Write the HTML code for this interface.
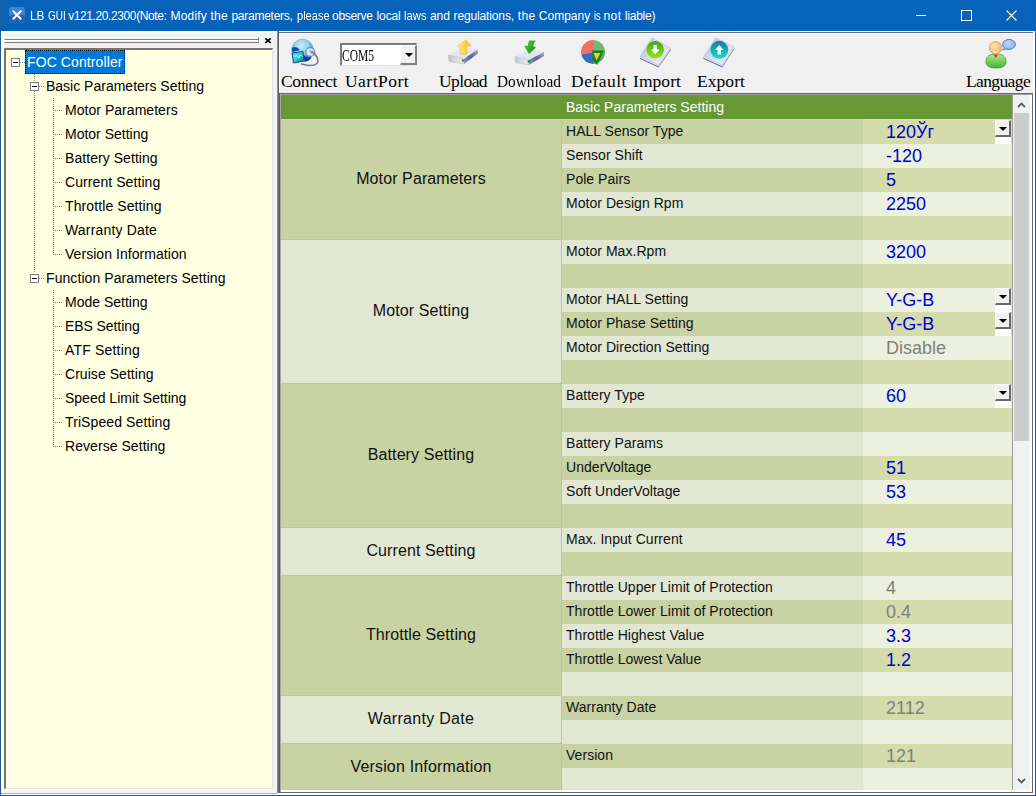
<!DOCTYPE html>
<html><head><meta charset="utf-8"><title>LB GUI</title>
<style>
*{box-sizing:border-box;margin:0;padding:0}
html,body{width:1036px;height:796px;overflow:hidden;background:#f0f0f0;font-family:"Liberation Sans",sans-serif}
body{position:relative}
div,i,span{position:absolute;display:block}
/* window frame */
#frame{left:0;top:0;width:1036px;height:796px;border:1px solid #1c5c9c;border-top:none;pointer-events:none;z-index:50}
#title{left:0;top:0;width:1036px;height:31px;background:#0763ba}
#ttext{left:30px;top:1px;height:31px;line-height:31px;color:#fff;font-size:12px;white-space:nowrap}
#ttext span{top:0;height:31px;line-height:31px;white-space:nowrap}
/* left dock pane */
#lp{left:1px;top:31px;width:276px;height:764px;background:#f2f2f2;border-left:3px solid #fff;border-top:2px solid #fff;border-bottom:1px solid #fff}
.grip{left:4px;width:255px;height:3px;border-top:1px solid #fff;border-left:1px solid #fff;border-bottom:1px solid #808080;border-right:1px solid #808080;background:#f0f0f0}
#tree{left:4px;top:48px;width:269px;height:741px;background:#ffffe1;border-top:2px solid #747474;border-left:2px solid #747474;border-right:1px solid #e4e4e4;border-bottom:1px solid #e4e4e4}
.ti,.tsel{height:24px;line-height:25px;font-size:14px;color:#000;white-space:nowrap}
.tsel{background:#0078d7;color:#fff;padding:0 2px;width:100px;letter-spacing:.1px;outline:1px dotted #000;outline-offset:-1px}
.tbox{width:9px;height:9px;border:1px solid #808080;background:#fff}
.tbox i{left:1px;top:3px;width:5px;height:1px;background:#000}
.hdot{height:1px;background:repeating-linear-gradient(90deg,#808080 0 1px,transparent 1px 2px)}
.vdot{width:1px;background:repeating-linear-gradient(180deg,#808080 0 1px,transparent 1px 2px)}
/* right panel */
#rp{left:277px;top:31px;width:758px;height:764px;background:#fff}
#tb{left:279px;top:33px;width:754px;height:60px;background:#f0f0f0;border-top:1px solid #fafafa;border-left:1px solid #fafafa}
.tl{height:18px;line-height:18px;font-family:"Liberation Serif",serif;font-size:17.5px;color:#000;white-space:nowrap}
.ico{width:32px;height:32px;top:36px}
/* grid */
#grid{left:281px;top:95px;width:731px;height:695px;background:#fff;overflow:hidden}
#ghead{left:281px;top:95px;width:731px;height:24px;background:#669933;color:#fff;font-size:14px;line-height:24px}
#ghead span{left:285px;top:0;white-space:nowrap}
.grp{left:281px;width:281px;text-align:center;font-size:16px;color:#111;border-right:1px solid #bcc4a2;border-bottom:1px solid #bcc4a2;white-space:nowrap;letter-spacing:.1px}
.gd{background:#c8d2a2}
.gl{background:#e2e7d3}
.pc{left:562px;width:301px;height:24px;line-height:23px;font-size:14px;color:#111;padding-left:4px;white-space:nowrap;letter-spacing:.04px}
.vc{left:863px;width:149px;height:24px;line-height:25px;font-size:18px;padding-left:23px;white-space:nowrap}
.pc.rd{background:#c8d2a2}
.pc.rl{background:#e2e7d3}
.vc.rd{background:#d3dcaa}
.vc.rl{background:#ecf0de}
.vb{color:#0000d0}
.vg{color:#808080}
.cb{left:995px;width:16px;height:24px;background:#fff}
.cbb{left:0;top:0;width:16px;height:17px;background:#f0f0f0;border-top:1px solid #fff;border-left:1px solid #fff;border-right:2px solid #696969;border-bottom:2px solid #696969}
.cbb i{left:3px;top:6px;width:0;height:0;border-left:4px solid transparent;border-right:4px solid transparent;border-top:4px solid #000}
/* scrollbar */
#sb{left:1013px;top:95px;width:17px;height:695px;background:#f1f1f2}
#thumb{left:1014px;top:113px;width:14.5px;height:328.4px;background:#cdcdcd}
</style></head><body>
<div id="title"></div>
<div id="ttext"><span style="left:0.1px;transform:scaleX(0.988);transform-origin:0 50%">LB</span><span style="left:17.5px;transform:scaleX(0.835);transform-origin:0 50%">GUI</span><span style="left:38.2px;letter-spacing:-0.399px">v121.20.2300(Note:</span><span style="left:140.5px;letter-spacing:0.191px">Modify</span><span style="left:180.5px;letter-spacing:0.264px">the</span><span style="left:201.4px;letter-spacing:-0.252px">parameters,</span><span style="left:266.6px;transform:scaleX(0.922);transform-origin:0 50%">please</span><span style="left:302.1px;letter-spacing:-0.315px">observe</span><span style="left:346.6px;letter-spacing:-0.147px">local</span><span style="left:374.4px;transform:scaleX(0.941);transform-origin:0 50%">laws</span><span style="left:399.9px;letter-spacing:-0.008px">and</span><span style="left:423.6px;letter-spacing:-0.139px">regulations,</span><span style="left:487.8px;letter-spacing:0.314px">the</span><span style="left:508.8px;letter-spacing:0.007px">Company</span><span style="left:563.9px;transform:scaleX(0.773);transform-origin:0 50%">is</span><span style="left:573.5px;letter-spacing:0.414px">not</span><span style="left:594.7px;letter-spacing:-0.189px">liable)</span></div>
<svg style="position:absolute;left:0;top:0" width="1036" height="31" viewBox="0 0 1036 31">
 <rect x="9" y="7" width="16" height="16" rx="3" fill="#3f82cf"/>
 <rect x="9" y="15" width="16" height="8" rx="3" fill="#2463b0"/>
 <path d="M13.3 11.3 L20.7 18.7 M20.7 11.3 L13.3 18.7" stroke="#fff" stroke-width="2" stroke-linecap="round"/>
 <path d="M916 15.5 H926" stroke="#fff" stroke-width="1"/>
 <rect x="961.5" y="10.5" width="10" height="10" fill="none" stroke="#fff" stroke-width="1"/>
 <path d="M1006.5 10.5 L1016.5 20.5 M1016.5 10.5 L1006.5 20.5" stroke="#fff" stroke-width="1.1"/>
</svg>

<div id="lp"></div>
<div class="grip" style="top:37px"></div>
<div class="grip" style="top:40px"></div>
<svg style="position:absolute;left:264px;top:37px" width="8" height="7" viewBox="0 0 8 7"><path d="M1.3 1.3 L6.7 5.9 M6.7 1.3 L1.3 5.9" stroke="#000" stroke-width="1.7"/></svg>
<div id="tree"></div>
<div style="left:4px;top:789px;width:273px;height:4px;background:#f7f5f4"></div><div style="left:1px;top:793px;width:276px;height:1px;background:#a4b0bc"></div>
<div class="tsel" style="left:25px;top:50px">FOC Controller</div>
<div class="tbox" style="left:11px;top:58px"><i></i></div>
<div class="hdot" style="left:20px;top:62px;width:5px"></div>
<div class="ti" style="left:46px;top:74px">Basic Parameters Setting</div>
<div class="tbox" style="left:30px;top:82px"><i></i></div>
<div class="hdot" style="left:39px;top:86px;width:5px"></div>
<div class="ti" style="left:65px;top:98px;letter-spacing:0.040px">Motor Parameters</div>
<div class="hdot" style="left:53px;top:110px;width:9px"></div>
<div class="ti" style="left:65px;top:122px">Motor Setting</div>
<div class="hdot" style="left:53px;top:134px;width:9px"></div>
<div class="ti" style="left:65px;top:146px;letter-spacing:0.057px">Battery Setting</div>
<div class="hdot" style="left:53px;top:158px;width:9px"></div>
<div class="ti" style="left:65px;top:170px;letter-spacing:0.079px">Current Setting</div>
<div class="hdot" style="left:53px;top:182px;width:9px"></div>
<div class="ti" style="left:65px;top:194px;letter-spacing:0.100px">Throttle Setting</div>
<div class="hdot" style="left:53px;top:206px;width:9px"></div>
<div class="ti" style="left:65px;top:218px;letter-spacing:0.167px">Warranty Date</div>
<div class="hdot" style="left:53px;top:230px;width:9px"></div>
<div class="ti" style="left:65px;top:242px;letter-spacing:0.050px">Version Information</div>
<div class="hdot" style="left:53px;top:254px;width:9px"></div>
<div class="ti" style="left:46px;top:266px;letter-spacing:0.081px">Function Parameters Setting</div>
<div class="tbox" style="left:30px;top:274px"><i></i></div>
<div class="hdot" style="left:39px;top:278px;width:5px"></div>
<div class="ti" style="left:65px;top:290px">Mode Setting</div>
<div class="hdot" style="left:53px;top:302px;width:9px"></div>
<div class="ti" style="left:65px;top:314px;letter-spacing:-0.080px">EBS Setting</div>
<div class="hdot" style="left:53px;top:326px;width:9px"></div>
<div class="ti" style="left:65px;top:338px;letter-spacing:0.180px">ATF Setting</div>
<div class="hdot" style="left:53px;top:350px;width:9px"></div>
<div class="ti" style="left:65px;top:362px;letter-spacing:0.046px">Cruise Setting</div>
<div class="hdot" style="left:53px;top:374px;width:9px"></div>
<div class="ti" style="left:65px;top:386px">Speed Limit Setting</div>
<div class="hdot" style="left:53px;top:398px;width:9px"></div>
<div class="ti" style="left:65px;top:410px;letter-spacing:0.100px">TriSpeed Setting</div>
<div class="hdot" style="left:53px;top:422px;width:9px"></div>
<div class="ti" style="left:65px;top:434px;letter-spacing:0.057px">Reverse Setting</div>
<div class="hdot" style="left:53px;top:446px;width:9px"></div>
<div class="vdot" style="left:34px;top:74px;height:7px"></div>
<div class="vdot" style="left:34px;top:91px;height:182px"></div>
<div class="vdot" style="left:53px;top:98px;height:157px"></div>
<div class="vdot" style="left:53px;top:290px;height:157px"></div>

<div id="rp"></div>
<div style="left:277px;top:31px;width:1px;height:762px;background:#909094"></div>
<div style="left:278px;top:31px;width:1px;height:762px;background:#5e5e66"></div>
<div style="left:278px;top:32px;width:757px;height:761px;border-top:1px solid #696969;border-left:1px solid #5e5e66;border-bottom:1px solid #696969"></div><div style="left:1032px;top:93px;width:1px;height:700px;background:#696969"></div><div style="left:1033px;top:32px;width:2px;height:763px;background:#fff"></div>
<div id="tb"></div>

<div class="tl" style="left:281px;top:72px;letter-spacing:-0.33px">Connect</div>
<div class="tl" style="left:345px;top:72px;letter-spacing:0.47px">UartPort</div>
<div class="tl" style="left:439px;top:72px;letter-spacing:-0.59px">Upload</div>
<div class="tl" style="left:497px;top:72px;transform:scaleX(0.878);transform-origin:0 50%">Download</div>
<div class="tl" style="left:571px;top:72px;letter-spacing:0.50px">Default</div>
<div class="tl" style="left:633px;top:72px;letter-spacing:0.06px">Import</div>
<div class="tl" style="left:697px;top:72px;letter-spacing:0.06px">Export</div>
<div class="tl" style="left:966px;top:72px;letter-spacing:-0.62px">Language</div>

<!-- combobox -->
<div style="left:340px;top:43px;width:77px;height:23px;background:#fff;border-top:2px solid #7c7c7c;border-left:2px solid #7c7c7c;border-right:1px solid #e3e3e3;border-bottom:1px solid #e3e3e3"></div>
<div style="left:400px;top:45px;width:17px;height:20px;background:#f0f0f0;border-top:1px solid #fff;border-left:1px solid #fff;border-right:2px solid #808080;border-bottom:2px solid #808080"><i style="left:4px;top:7px;width:0;height:0;border-left:4px solid transparent;border-right:4px solid transparent;border-top:4px solid #000"></i></div>

<div class="tl" style="left:342px;top:46px;transform:scaleX(0.658);transform-origin:0 50%">COM5</div>
<!-- ICONS -->
<svg style="position:absolute;left:0;top:33px" width="1036" height="40" viewBox="0 33 1036 40">
<defs>
 <radialGradient id="gl1" cx="0.45" cy="0.3" r="0.75"><stop offset="0" stop-color="#c8ecf8"/><stop offset="0.45" stop-color="#8fd0ec"/><stop offset="0.8" stop-color="#2a7fd0"/><stop offset="1" stop-color="#0a46a8"/></radialGradient>
 <linearGradient id="scr" x1="0" y1="0" x2="1" y2="1"><stop offset="0" stop-color="#7fe08a"/><stop offset="0.5" stop-color="#2fd0c8"/><stop offset="1" stop-color="#0a58b8"/></linearGradient>
 <linearGradient id="drvF" x1="0" y1="0" x2="1" y2="0"><stop offset="0" stop-color="#c4c4cc"/><stop offset="0.5" stop-color="#dcdce2"/><stop offset="1" stop-color="#e8e8ee"/></linearGradient>
 <linearGradient id="drvS" x1="0" y1="1" x2="1" y2="0"><stop offset="0" stop-color="#9aa0c0"/><stop offset="0.5" stop-color="#5c648c"/><stop offset="1" stop-color="#a8acc4"/></linearGradient>
 <linearGradient id="yel" x1="0" y1="0" x2="1" y2="0"><stop offset="0" stop-color="#fbec9a"/><stop offset="0.5" stop-color="#f6d648"/><stop offset="1" stop-color="#eec040"/></linearGradient>
 <linearGradient id="grn" x1="0" y1="0" x2="1" y2="1"><stop offset="0" stop-color="#58d838"/><stop offset="1" stop-color="#108810"/></linearGradient>
 <linearGradient id="gcir" x1="0" y1="0" x2="0" y2="1"><stop offset="0" stop-color="#3aa818"/><stop offset="1" stop-color="#98e818"/></linearGradient>
 <linearGradient id="tcir" x1="0" y1="0" x2="0" y2="1"><stop offset="0" stop-color="#0a80a4"/><stop offset="1" stop-color="#18e0c0"/></linearGradient>
 <linearGradient id="pap" x1="0" y1="0" x2="1" y2="1"><stop offset="0" stop-color="#aeb4d4"/><stop offset="0.5" stop-color="#d8dcf0"/><stop offset="1" stop-color="#f0f0fa"/></linearGradient>
 <radialGradient id="head" cx="0.4" cy="0.35" r="0.7"><stop offset="0" stop-color="#fde0b0"/><stop offset="1" stop-color="#f0b070"/></radialGradient>
 <linearGradient id="body" x1="0" y1="0" x2="0" y2="1"><stop offset="0" stop-color="#b8e8a0"/><stop offset="0.5" stop-color="#78d058"/><stop offset="1" stop-color="#48b030"/></linearGradient>
 <radialGradient id="bub" cx="0.4" cy="0.4" r="0.7"><stop offset="0" stop-color="#c0d8fc"/><stop offset="1" stop-color="#88b0f4"/></radialGradient>
 <filter id="bl" x="-10%" y="-10%" width="120%" height="120%"><feGaussianBlur stdDeviation="0.45"/></filter>
</defs>
<!-- Connect: globe + monitor + plug -->
<g filter="url(#bl)">
 <circle cx="302.5" cy="50" r="10.8" fill="url(#gl1)" stroke="#86b4cc" stroke-width="0.8"/>
 <path d="M292 48 Q296 45.5 300 50 L292.3 52 Z" fill="#0c4cb4"/>
 <path d="M303.5 55 Q307 59 312 56.5 Q310 61 304.5 62 Z" fill="#0c3c98"/>
 <path d="M292 53 L303 51.5 L304 61 L293.5 63 Z" fill="url(#scr)" stroke="#0a4ea8" stroke-width="1"/>
 <path d="M294.5 57 l2 -2 l2 3 l2 -3 l1.5 1.5" stroke="#d8f8e8" stroke-width="1" fill="none"/>
 <circle cx="310.3" cy="52" r="4.4" fill="#dfe6f4" stroke="#6c86a8" stroke-width="1.1"/>
 <path d="M309 50.3 L314 51 L311 54 Z" fill="#8c9cbc"/>
 <path d="M312.5 52.5 C318 56 320.5 63.5 314 65 C309 66 304.5 65 301.5 64" stroke="#7078a8" stroke-width="1.5" fill="none" stroke-linecap="round"/>
</g>
<!-- Upload -->
<g filter="url(#bl)">
 <path d="M448.5 55 L464 59 L477.5 49.5 L463 47.5 Z" fill="#e4e4f0"/>
 <path d="M448.5 55 L464 59 L464 64 L449 61.5 Z" fill="url(#drvF)" stroke="#b4b4c0" stroke-width="0.5"/>
 <path d="M464 59 L477.5 49.5 L478 53.5 L464 64 Z" fill="url(#drvS)"/>
 <circle cx="463" cy="60.5" r="1.2" fill="#18a030"/>
 <path d="M460 54 L460 47.5 L457 46 L466 39.8 L471.5 45.8 L467 46.5 L467 54 Q463.5 55.5 460 54 Z" fill="url(#yel)" stroke="#e0c060" stroke-width="0.5"/>
</g>
<!-- Download -->
<g filter="url(#bl)">
 <path d="M515 56.5 L529 60 L544 52 L531 50 Z" fill="#e4e4f0"/>
 <path d="M515 56.5 L529 60 L529 65 L515.5 62.5 Z" fill="url(#drvF)" stroke="#b4b4c0" stroke-width="0.5"/>
 <path d="M529 60 L544 52 L544 56 L529 65 Z" fill="url(#drvS)"/>
 <circle cx="529" cy="61.5" r="1.4" fill="#18a030"/>
 <path d="M529 40.5 L535.5 40.5 L533 46 L536 47.5 L529 54 L524 45.5 L527.5 46 Z" fill="url(#grn)"/>
</g>
<!-- Default -->
<g filter="url(#bl)">
 <path d="M593 52 L593 40 A12 12 0 0 0 581.3 54.5 Z" fill="#ee7062"/>
 <path d="M593 52 L605 52 A12 12 0 0 0 593 40 Z" fill="#70b870"/>
 <path d="M593 52 L581.3 54.5 A12 12 0 0 0 593 64 Z" fill="#3a6cc0"/>
 <path d="M593 52 L605 52 A12 12 0 0 1 593 64 Z" fill="#58a858"/>
 <path d="M592.5 50.5 L604 50.5 L597 65 L592.5 60 Z" fill="#148414"/>
 <path d="M593.5 53 L600.5 53 L596.5 60.5 Z" fill="#f4d020"/>
</g>
<!-- Import -->
<g filter="url(#bl)">
 <path d="M640 59 L658.5 67.5 L670.8 50 L670.5 48 L658.5 65 L640 56.5 Z" fill="#70789c"/><path d="M640 57.8 L658.5 66.2 L670.6 49 L670.5 48 L658.5 65 L640 56.5 Z" fill="#f4f4fc"/>
 <path d="M652 37.8 L670.5 48 L658.5 65 L640 56.5 Z" fill="url(#pap)" stroke="#c0c4dc" stroke-width="0.6"/>
 <circle cx="655.2" cy="49.8" r="8.8" fill="url(#gcir)"/>
 <path d="M653.5 45 L657 45 L657 49.5 L659.5 49.5 L655.2 54.5 L651 49.5 L653.5 49.5 Z" fill="#fff"/>
</g>
<!-- Export -->
<g filter="url(#bl)">
 <path d="M703.5 59 L722.3 67.5 L734.3 49 L734 47 L722.3 65 L703.5 56.5 Z" fill="#70789c"/><path d="M703.5 57.8 L722.3 66.2 L734.1 48 L734 47 L722.3 65 L703.5 56.5 Z" fill="#f4f4fc"/>
 <path d="M715.8 37.8 L734 47 L722.3 65 L703.5 56.5 Z" fill="url(#pap)" stroke="#c0c4dc" stroke-width="0.6"/>
 <circle cx="719.3" cy="49.8" r="9" fill="url(#tcir)"/>
 <path d="M717.6 54.5 L721 54.5 L721 50 L723.5 50 L719.3 45 L715 50 L717.6 50 Z" fill="#fff"/>
</g>
<!-- Language -->
<g filter="url(#bl)">
 <ellipse cx="1009" cy="44.4" rx="6.4" ry="5" fill="url(#bub)" stroke="#5478d0" stroke-width="1"/>
 <path d="M1004.5 47.5 L1002.5 50 L1006.5 49" fill="#a0c0f8" stroke="#5478d0" stroke-width="0.8"/>
 <path d="M986 62 C986 56 990 54 996 54 C1002 54 1006 56 1006 62 C1006 66 1002 68 996 68 C990 68 986 66 986 62 Z" fill="url(#body)" stroke="#3c9828" stroke-width="0.8"/>
 <path d="M993.5 54.5 L995.8 58 L998 54.5 Z" fill="#e03020"/>
 <circle cx="995.6" cy="47.8" r="6.3" fill="url(#head)" stroke="#d89850" stroke-width="0.7"/>
 <path d="M992.5 51.5 Q995.6 54 998.7 51.5 Z" fill="#fff8f0"/>
</g>
</svg>


<!-- grid border -->
<div style="left:279px;top:93px;width:753px;height:1px;background:#696969"></div>
<div style="left:279px;top:93px;width:1px;height:699px;background:#5e5e66"></div>
<div style="left:280px;top:94px;width:752px;height:1px;background:#a0a0a0"></div>
<div style="left:280px;top:94px;width:1px;height:698px;background:#a6a8a6"></div>
<div id="grid"></div>
<div style="left:281px;top:119px;width:282px;height:1px;background:#cfd9ad"></div><div style="left:562px;top:119px;width:301px;height:1px;background:#cfd9ad"></div><div style="left:863px;top:119px;width:149px;height:1px;background:#d8e1b4"></div>
<div id="ghead"><span>Basic Parameters Setting</span></div>
<div style="left:0;top:0;width:1036px;height:790px;overflow:hidden">
<div class="grp gd" style="top:120px;height:120px;line-height:117px">Motor Parameters</div>
<div class="pc rd" style="top:120px">HALL Sensor Type</div>
<div class="vc rd vb" style="top:120px">120Ўг</div>
<div class="cb" style="top:120px"><div class="cbb"><i></i></div></div>
<div class="pc rl" style="top:144px">Sensor Shift</div>
<div class="vc rl vb" style="top:144px">-120</div>
<div class="pc rd" style="top:168px">Pole Pairs</div>
<div class="vc rd vb" style="top:168px">5</div>
<div class="pc rl" style="top:192px">Motor Design Rpm</div>
<div class="vc rl vb" style="top:192px">2250</div>
<div class="pc rd" style="top:216px"></div>
<div class="vc rd vg" style="top:216px"></div>
<div class="grp gl" style="top:240px;height:144px;line-height:141px">Motor Setting</div>
<div class="pc rl" style="top:240px">Motor Max.Rpm</div>
<div class="vc rl vb" style="top:240px">3200</div>
<div class="pc rd" style="top:264px"></div>
<div class="vc rd vg" style="top:264px"></div>
<div class="pc rl" style="top:288px">Motor HALL Setting</div>
<div class="vc rl vb" style="top:288px">Y-G-B</div>
<div class="cb" style="top:288px"><div class="cbb"><i></i></div></div>
<div class="pc rd" style="top:312px">Motor Phase Setting</div>
<div class="vc rd vb" style="top:312px">Y-G-B</div>
<div class="cb" style="top:312px"><div class="cbb"><i></i></div></div>
<div class="pc rl" style="top:336px">Motor Direction Setting</div>
<div class="vc rl vg" style="top:336px">Disable</div>
<div class="pc rd" style="top:360px"></div>
<div class="vc rd vg" style="top:360px"></div>
<div class="grp gd" style="top:384px;height:144px;line-height:141px">Battery Setting</div>
<div class="pc rl" style="top:384px">Battery Type</div>
<div class="vc rl vb" style="top:384px">60</div>
<div class="cb" style="top:384px"><div class="cbb"><i></i></div></div>
<div class="pc rd" style="top:408px"></div>
<div class="vc rd vg" style="top:408px"></div>
<div class="pc rl" style="top:432px">Battery Params</div>
<div class="vc rl vg" style="top:432px"></div>
<div class="pc rd" style="top:456px">UnderVoltage</div>
<div class="vc rd vb" style="top:456px">51</div>
<div class="pc rl" style="top:480px">Soft UnderVoltage</div>
<div class="vc rl vb" style="top:480px">53</div>
<div class="pc rd" style="top:504px"></div>
<div class="vc rd vg" style="top:504px"></div>
<div class="grp gl" style="top:528px;height:48px;line-height:45px">Current Setting</div>
<div class="pc rl" style="top:528px">Max. Input Current</div>
<div class="vc rl vb" style="top:528px">45</div>
<div class="pc rd" style="top:552px"></div>
<div class="vc rd vg" style="top:552px"></div>
<div class="grp gd" style="top:576px;height:120px;line-height:117px">Throttle Setting</div>
<div class="pc rl" style="top:576px">Throttle Upper Limit of Protection</div>
<div class="vc rl vg" style="top:576px">4</div>
<div class="pc rd" style="top:600px">Throttle Lower Limit of Protection</div>
<div class="vc rd vg" style="top:600px">0.4</div>
<div class="pc rl" style="top:624px">Throttle Highest Value</div>
<div class="vc rl vb" style="top:624px">3.3</div>
<div class="pc rd" style="top:648px">Throttle Lowest Value</div>
<div class="vc rd vb" style="top:648px">1.2</div>
<div class="pc rl" style="top:672px"></div>
<div class="vc rl vg" style="top:672px"></div>
<div class="grp gl" style="top:696px;height:48px;line-height:45px;letter-spacing:0.292px">Warranty Date</div>
<div class="pc rd" style="top:696px">Warranty Date</div>
<div class="vc rd vg" style="top:696px">2112</div>
<div class="pc rl" style="top:720px"></div>
<div class="vc rl vg" style="top:720px"></div>
<div class="grp gd" style="top:744px;height:48px;line-height:45px;letter-spacing:0.172px">Version Information</div>
<div class="pc rd" style="top:744px">Version</div>
<div class="vc rd vg" style="top:744px">121</div>
<div class="pc rl" style="top:768px"></div>
<div class="vc rl vg" style="top:768px"></div>
</div>
<div style="left:1012px;top:95px;width:1px;height:695px;background:#9ca094"></div>
<div id="sb"></div>
<div id="thumb"></div>
<svg style="position:absolute;left:1013px;top:95px" width="17" height="695" viewBox="0 0 17 695">
 <path d="M5 12 L8.5 8.5 L12 12" fill="none" stroke="#606060" stroke-width="1.9"/>
 <path d="M5 684 L8.5 687.5 L12 684" fill="none" stroke="#606060" stroke-width="1.9"/>
</svg>
<div id="frame"></div>
</body></html>
